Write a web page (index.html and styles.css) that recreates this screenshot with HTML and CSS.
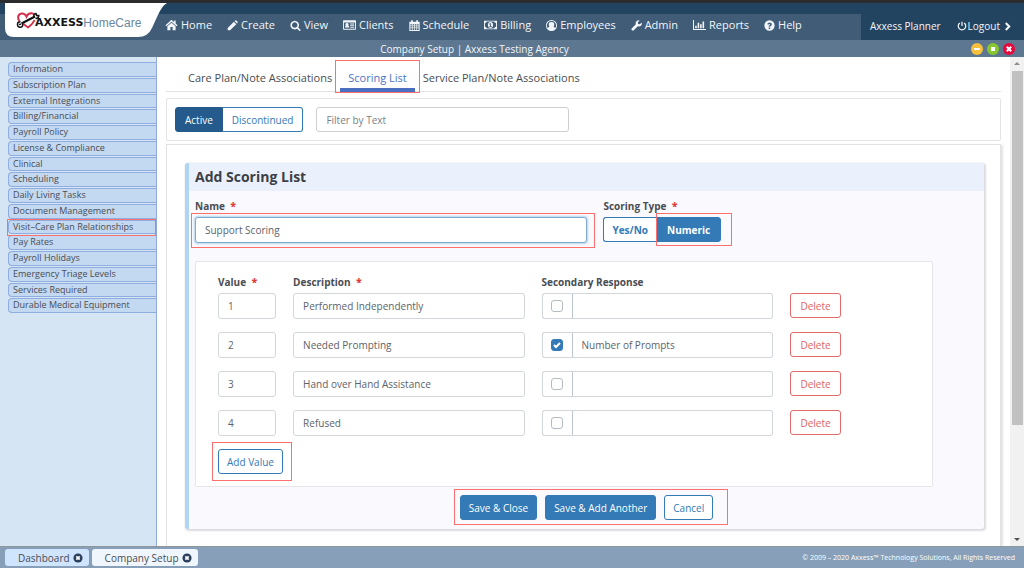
FILE: index.html
```html
<!DOCTYPE html>
<html lang="en">
<head>
<meta charset="utf-8">
<title>Company Setup | Axxess Testing Agency</title>
<meta name="viewport" content="width=device-width, initial-scale=1">
<link rel="stylesheet" href="styles.css">
</head>
<body>
<header class="topbar">
  <a class="logo" href="#" aria-label="Axxess HomeCare">
    <svg class="logo-tab" viewBox="0 0 162 34" aria-hidden="true"><path d="M0 0H162C157 3 155 8 152 14L147 25Q143 34 133 34H9Q0 34 0 25Z" fill="#fff"/></svg>
    <svg class="logo-mark" viewBox="0 0 24 17" aria-hidden="true">
      <path d="M3.500 9C0.500 5 3 1.500 6 1.500Q9 1.500 10.500 4.500Q12 1 15.500 1.200Q17 1.300 18 2.300" fill="none" stroke="#d2304c" stroke-width="2"/>
      <path d="M7.500 12L12 15.500Q17 12 18.500 8" fill="none" stroke="#d2304c" stroke-width="1.800"/>
      <path d="M5.500 11.500L19 4.500" stroke="#111" stroke-width="2"/>
      <path d="M4.500 9.800Q1.500 9.600 1.500 12.500T4.500 15.200Q7.500 15 6.500 11.500M3 12.600L5 12M18 5.500Q17 2 20 1.500L20.500 3.500L22.800 3.500Q22.800 6.500 19.500 6.500" fill="none" stroke="#111" stroke-width="1.500"/>
    </svg>
    <span class="logo-bold">AXXESS</span><span class="logo-light">HomeCare</span>
  </a>
  <nav class="nav" aria-label="Main">
    <a href="#"><svg class="i14" viewBox="0 0 16 16"><path d="M8 1L0 8.200L1.200 9.500L8 3.500L14.800 9.500L16 8.200L13.500 6V2H11.500V4.200Z"/><path d="M8 5L2.500 9.800V15H6.500V10.800H9.500V15H13.500V9.800Z"/></svg>Home</a>
    <a href="#"><svg viewBox="0 0 16 16"><path d="M1 11.500L10 2.500L13.500 6L4.500 15H1ZM11 1.500L12 0.600Q13 0 14 1L15.200 2.200Q16 3 15.400 4L14.500 5Z"/></svg>Create</a>
    <a href="#"><svg viewBox="0 0 1792 1792"><path d="M1216 832q0-185-131.500-316.500t-316.500-131.500-316.500 131.500-131.500 316.500 131.500 316.500 316.500 131.500 316.500-131.500 131.500-316.500zm512 832q0 52-38 90t-90 38q-54 0-90-38l-343-342q-179 124-399 124-143 0-273.500-55.500t-225-150-150-225-55.500-273.500 55.500-273.500 150-225 225-150 273.500-55.500 273.500 55.500 225 150 150 225 55.500 273.500q0 220-124 399l343 343q37 37 37 90z"/></svg>View</a>
    <a href="#"><svg class="i14" viewBox="0 0 18 16"><path fill-rule="evenodd" d="M1 1.500H17Q18 1.500 18 2.500V13.500Q18 14.500 17 14.500H1Q0 14.500 0 13.500V2.500Q0 1.500 1 1.500ZM1.300 4.500V13.200H16.700V4.500ZM3 11.500V10Q3 8.800 4 8.600Q3.300 8 3.300 7Q3.300 5.300 5.500 5.300T7.700 7Q7.700 8 7 8.600Q8.500 8.800 8.500 10V11.500ZM10 6H15.500V7.400H10ZM10 8.400H15.500V9.600H10ZM10 10.600H15.500V11.800H10Z"/></svg>Clients</a>
    <a href="#"><svg viewBox="0 0 16 16"><path fill-rule="evenodd" d="M0.500 2.500H3V0.500H5.500V2.500H10.500V0.500H13V2.500H15.500V16H0.500ZM2 6V8H4.200V6ZM5.200 6V8H7.500V6ZM8.500 6V8H10.800V6ZM11.800 6V8H14V6ZM2 9V11H4.200V9ZM5.200 9V11H7.500V9ZM8.500 9V11H10.800V9ZM11.800 9V11H14V9ZM2 12V14.500H4.200V12ZM5.200 12V14.500H7.500V12ZM8.500 12V14.500H10.800V12ZM11.800 12V14.500H14V12Z"/></svg>Schedule</a>
    <a href="#"><svg class="i14" viewBox="0 0 18 14"><path fill-rule="evenodd" d="M0 1H18V13H0ZM1.300 4.500V9.500Q3.600 9.700 3.800 11.700H14.200Q14.400 9.700 16.700 9.500V4.500Q14.400 4.300 14.200 2.300H3.800Q3.600 4.300 1.300 4.500ZM9 3Q12.500 3 12.500 7T9 11T5.500 7T9 3ZM8.400 4.500L7 5.700L7.700 6.500L8.400 6V8.800H7.200V9.700H10.800V8.800H9.600V4.500Z"/></svg>Billing</a>
    <a href="#"><svg viewBox="0 0 16 16"><path fill-rule="evenodd" d="M8 0A8 8 0 1 1 8 16A8 8 0 1 1 8 0ZM2.900 12Q3.500 9.800 5.200 9.500Q4 8.300 4 6.500Q4 3 8 3T12 6.500Q12 8.300 10.800 9.500Q12.500 9.800 13.100 12Q14.700 10.300 14.700 8A6.700 6.700 0 1 0 1.300 8Q1.300 10.300 2.900 12Z"/></svg>Employees</a>
    <a href="#"><svg viewBox="0 0 16 16"><path d="M15.800 4.200Q16.200 6.500 14.500 8.200Q12.600 9.900 9.900 9.200L4 15Q2.800 16 1.500 15Q0 13.600 1 12.300L7 6.300Q6.200 3.500 8 1.700Q9.700 0 12.200 0.600L12.500 0.900L10 3.300L10.300 5.800L12.800 6.200L15.300 3.900Z"/></svg>Admin</a>
    <a href="#"><svg class="i14" viewBox="0 0 18 16"><path d="M0 1H1.400V13.600H18V15H0ZM3 9H5.200V12.500H3ZM6.400 5H8.600V12.500H6.400ZM9.800 7H12V12.500H9.800ZM13.200 3H15.400V12.500H13.200Z"/></svg>Reports</a>
    <a href="#"><svg viewBox="0 0 16 16"><path fill-rule="evenodd" d="M8 0.500A7.500 7.500 0 1 1 8 15.500A7.500 7.500 0 1 1 8 0.500ZM4.600 5.800L6.400 6.800Q7 5.700 7.900 5.700Q9 5.700 9 6.500Q9 7 8 7.600Q6.800 8.400 6.800 9.800H9Q9 9.300 10 8.700Q11.500 7.800 11.500 6.300Q11.500 3.500 8.100 3.500Q5.800 3.500 4.600 5.800ZM6.800 10.800V13H9V10.800Z"/></svg>Help</a>
  </nav>
  <div class="account">
    <a href="#">Axxess Planner</a>
    <a class="logout" href="#"><svg viewBox="0 0 16 16" class="line"><path d="M4.500 3.200A6 6 0 1 0 11.500 3.200M8 1V8"/></svg>Logout<svg viewBox="0 0 12 16" class="line chev"><path d="M3.500 3L8.500 8L3.500 13"/></svg></a>
  </div>
</header>
<div class="titlebar">
  <h1>Company Setup | Axxess Testing Agency</h1>
  <div class="window-buttons">
    <button class="min" aria-label="Minimize"><svg viewBox="0 0 12 12"><path d="M3 6H9"/></svg></button>
    <button class="max" aria-label="Maximize"><svg viewBox="0 0 12 12"><path d="M4 6H8" stroke-width="4"/></svg></button>
    <button class="close" aria-label="Close"><svg viewBox="0 0 12 12"><path d="M3.800 3.800L8.200 8.200M8.200 3.800L3.800 8.200"/></svg></button>
  </div>
</div>
<div class="workspace">
  <aside class="sidebar">
    <ul>
      <li><a href="#">Information</a></li>
      <li><a href="#">Subscription Plan</a></li>
      <li><a href="#">External Integrations</a></li>
      <li><a href="#">Billing/Financial</a></li>
      <li><a href="#">Payroll Policy</a></li>
      <li><a href="#">License &amp; Compliance</a></li>
      <li><a href="#">Clinical</a></li>
      <li><a href="#">Scheduling</a></li>
      <li><a href="#">Daily Living Tasks</a></li>
      <li><a href="#">Document Management</a></li>
      <li class="marked mark-side"><a href="#">Visit–Care Plan Relationships</a></li>
      <li><a href="#">Pay Rates</a></li>
      <li><a href="#">Payroll Holidays</a></li>
      <li><a href="#">Emergency Triage Levels</a></li>
      <li><a href="#">Services Required</a></li>
      <li><a href="#">Durable Medical Equipment</a></li>
    </ul>
  </aside>
  <main class="content">
    <nav class="tabs" aria-label="Sections">
      <a href="#">Care Plan/Note Associations</a>
      <a href="#" class="current marked mark-tab">Scoring List</a>
      <a href="#">Service Plan/Note Associations</a>
    </nav>
    <section class="toolbar">
      <div class="segmented">
        <button class="btn navy">Active</button><button class="btn outline">Discontinued</button>
      </div>
      <input class="field filter" type="text" placeholder="Filter by Text" aria-label="Filter by Text">
    </section>
    <section class="panel">
      <form class="card">
        <h2>Add Scoring List</h2>
        <div class="card-body">
          <div class="top-fields">
            <div class="name-group">
              <label for="name">Name <b class="req">*</b></label>
              <div class="marked mark-name"><input class="field focused" id="name" type="text" value="Support Scoring"></div>
            </div>
            <div class="type-group">
              <span class="label" id="type-label">Scoring Type <b class="req">*</b></span>
              <div class="segmented strong" role="group" aria-labelledby="type-label">
                <button type="button" class="btn outline">Yes/No</button><span class="marked mark-numeric"><button type="button" class="btn primary">Numeric</button></span>
              </div>
            </div>
          </div>
          <div class="values">
            <div class="row heads">
              <span class="label" id="h-value">Value <b class="req">*</b></span>
              <span class="label" id="h-desc">Description <b class="req">*</b></span>
              <span class="label" id="h-sec">Secondary Response</span>
            </div>
            <div class="row">
              <input class="field" type="text" value="1" aria-labelledby="h-value">
              <input class="field" type="text" value="Performed Independently" aria-labelledby="h-desc">
              <div class="secondary"><span class="check"><input type="checkbox" aria-label="Enable secondary response 1"></span><input class="field" type="text" aria-labelledby="h-sec"></div>
              <button type="button" class="btn danger">Delete</button>
            </div>
            <div class="row">
              <input class="field" type="text" value="2" aria-labelledby="h-value">
              <input class="field" type="text" value="Needed Prompting" aria-labelledby="h-desc">
              <div class="secondary"><span class="check"><input type="checkbox" checked aria-label="Enable secondary response 2"><svg viewBox="0 0 12 12" aria-hidden="true"><path d="M3 6L5 8L9 4"/></svg></span><input class="field" type="text" value="Number of Prompts" aria-labelledby="h-sec"></div>
              <button type="button" class="btn danger">Delete</button>
            </div>
            <div class="row">
              <input class="field" type="text" value="3" aria-labelledby="h-value">
              <input class="field" type="text" value="Hand over Hand Assistance" aria-labelledby="h-desc">
              <div class="secondary"><span class="check"><input type="checkbox" aria-label="Enable secondary response 3"></span><input class="field" type="text" aria-labelledby="h-sec"></div>
              <button type="button" class="btn danger">Delete</button>
            </div>
            <div class="row">
              <input class="field" type="text" value="4" aria-labelledby="h-value">
              <input class="field" type="text" value="Refused" aria-labelledby="h-desc">
              <div class="secondary"><span class="check"><input type="checkbox" aria-label="Enable secondary response 4"></span><input class="field" type="text" aria-labelledby="h-sec"></div>
              <button type="button" class="btn danger">Delete</button>
            </div>
            <span class="marked mark-add"><button type="button" class="btn outline">Add Value</button></span>
          </div>
          <div class="actions">
            <div class="action-group marked mark-actions">
              <button type="button" class="btn primary">Save &amp; Close</button>
              <button type="button" class="btn primary">Save &amp; Add Another</button>
              <button type="button" class="btn outline">Cancel</button>
            </div>
          </div>
        </div>
      </form>
    </section>
  </main>
  <div class="scrollbar" aria-hidden="true"><i class="up"></i><i class="thumb"></i><i class="down"></i></div>
</div>
<footer class="taskbar">
  <div class="task dash"><a href="#">Dashboard</a><button aria-label="Close Dashboard"><svg viewBox="0 0 12 12"><circle cx="6" cy="6" r="5.500"/><path d="M4 4L8 8M8 4L4 8"/></svg></button></div>
  <div class="task setup"><a href="#">Company Setup</a><button aria-label="Close Company Setup"><svg viewBox="0 0 12 12"><circle cx="6" cy="6" r="5.500"/><path d="M4 4L8 8M8 4L4 8"/></svg></button></div>
  <p>© 2009 – 2020 Axxess™ Technology Solutions, All Rights Reserved</p>
</footer>
</body>
</html>
```

FILE: styles.css
```css
* { box-sizing: border-box; }
body {
  margin: 0;
  height: 100vh;
  display: flex;
  flex-direction: column;
  overflow: hidden;
  font: 10px/14px "Open Sans", "Noto Sans", sans-serif;
  color: #4a4d52;
  background: #fff;
}
a { color: inherit; text-decoration: none; }
button, input { font: inherit; margin: 0; }
h1, h2, p, ul { margin: 0; padding: 0; }

.topbar {
  position: relative;
  flex: none;
  display: flex;
  padding-top: 11px;
  border-top: 3px solid #2b2c2e;
  background: #234460;
  color: #f2f6fa;
}
.logo {
  position: absolute;
  top: 0;
  left: 5px;
  width: 162px;
  height: 34px;
  display: flex;
  align-items: center;
  padding: 5px 0 0 11px;
}
.logo-tab { position: absolute; left: 0; top: 0; width: 162px; height: 34px; }
.logo-mark { position: relative; width: 24px; height: 17px; margin: 0 -5px 5px 0; }
.logo-bold { position: relative; font: bold 11px/18px "DejaVu Sans", sans-serif; color: #151515; }
.logo-light { position: relative; font: 12px/16px "Liberation Sans", sans-serif; color: #6c86a0; }
.nav {
  flex: 1;
  display: flex;
  gap: 15px;
  padding-left: 165px;
  height: 26px;
  align-items: center;
  background: #405c76;
  font-size: 11px;
  font-weight: 500;
  white-space: nowrap;
}
.nav a { display: flex; align-items: center; gap: 3px; padding-bottom: 4px; }
.nav svg { width: 11px; height: 11px; fill: #f2f6fa; }
.nav .i14 { width: 13px; height: 12px; }
.account {
  flex: none;
  width: 163px;
  display: flex;
  justify-content: space-between;
  align-items: center;
  padding: 0 12px 2px 9px;
}
.logout { display: flex; align-items: center; gap: 1px; }
.line { width: 10px; height: 10px; fill: none; stroke: #f2f6fa; stroke-width: 2; }
.chev { width: 9px; height: 11px; stroke-width: 3; margin-left: 2px; }

.titlebar {
  flex: none;
  display: flex;
  align-items: center;
  height: 17px;
  padding-right: 9px;
  background: #5d7790;
  color: #f2f6fa;
}
.titlebar h1 { flex: 1; margin-right: 22px; text-align: center; font-size: 10px; font-weight: 400; }
.window-buttons { display: flex; gap: 4px; }
.window-buttons button { display: block; width: 12px; height: 12px; padding: 0; border: 0; border-radius: 50%; }
.window-buttons svg { display: block; width: 12px; height: 12px; stroke: #fff; stroke-width: 2; }
.min { background: #f6bf3c; }
.max { background: #86c62f; }
.close { background: #e8083b; }

.workspace { flex: 1; min-height: 0; display: flex; }
.sidebar {
  flex: none;
  width: 157px;
  padding: 5px 0 0 8px;
  border-right: 1px solid #8fabdb;
  background: #d5e5f4;
  font-size: 9px;
}
.sidebar ul { display: grid; grid-auto-rows: 1fr; gap: 1px; height: 251px; list-style: none; }
.sidebar li a {
  display: block;
  height: 100%;
  padding-left: 4px;
  border: 1px solid #8fadde;
  border-right: 0;
  border-radius: 4px 0 0 4px;
  background: #c3d8f1;
  line-height: 12px;
}

/* Red outlines that call out the controls to use */
.marked { position: relative; }
.marked::after { content: ""; position: absolute; z-index: 1; border: 1px solid #fb6f6f; pointer-events: none; }
.mark-side::after { inset: -1px 0 -2px -1px; }
.mark-tab::after { inset: 3px -5px -5px; }
.mark-name::after { inset: -4px -8px -5px -4px; }
.mark-numeric::after { inset: -4px -11px -4px 0; }
.mark-add::after { inset: -7px -9px -7px -6px; }
.mark-actions::after { inset: -6px -15px -5px -6px; }

.content { flex: 1; min-width: 0; padding: 0 9px; overflow: hidden; }
.tabs { display: flex; height: 35px; padding-left: 14px; border-bottom: 1px solid #e3e3e6; font-size: 11px; }
.tabs a { padding: 14px 8px 0; white-space: nowrap; }
.tabs .current { margin-bottom: -1px; border-bottom: 4px solid #4b6fc0; color: #4b74c4; }
.toolbar {
  display: flex;
  gap: 13px;
  margin-top: 6px;
  padding: 8px;
  border: 1px solid #e4e4e6;
  border-radius: 2px;
}
.panel {
  margin-top: 3px;
  padding: 18px 16px 18px 18px;
  height: 100%;
  border: 1px solid #e2e2e4;
  box-shadow: 2px 1px 2px #e3e3e5;
}

.btn {
  height: 25px;
  padding: 0 8px;
  border: 1px solid #337ab7;
  border-radius: 3px;
  background: #fff;
  color: #337ab7;
  white-space: nowrap;
}
.navy { background: #245b8c; border-color: #245b8c; color: #fff; }
.primary { background: #337ab7; color: #fff; }
.danger { border-color: #e36a6a; color: #e06464; }
.segmented { display: flex; }
.segmented > .btn:first-child { border-radius: 3px 0 0 3px; }
.segmented > :last-child, .segmented > :last-child .btn { border-radius: 0 3px 3px 0; }
.toolbar .btn { padding: 0 9px; border-left-width: 0; }
.toolbar .navy { border-left-width: 1px; }
.strong .btn { font-weight: 700; padding: 0 10px; }
.strong .outline { border-right: 0; padding: 0 8px; }
.field {
  min-width: 0;
  width: 100%;
  height: 26px;
  padding: 0 9px;
  border: 1px solid #d3d7dc;
  border-radius: 3px;
  background: #fff;
  color: #5d636a;
}
.field::placeholder { color: #7a7f86; opacity: 1; }
.toolbar .filter { width: 253px; height: 25px; border-color: #cfcfd2; }
.focused { border-color: #80acd2; box-shadow: 0 0 2px 1px #b9d4ec; }

.card {
  border-left: 4px solid #b0d4f4;
  border-radius: 3px;
  background: #f9f9fe;
  box-shadow: 1px 1px 2px 1px #dcdce0;
}
.card h2 { padding: 4px 6px; font-size: 14px; line-height: 20px; background: #eaf1fc; color: #3c4046; }
.card-body { padding: 8px 6px 9px; }
.top-fields { display: grid; grid-template-columns: 395fr 377fr; gap: 16px; }
label, .label { display: block; font-weight: 700; line-height: 14px; }
.req { margin-left: 3px; color: #e23b3b; }
.name-group label, .type-group .label { margin-bottom: 4px; }
.values {
  margin: 18px 45px 0 0;
  padding: 13px 91px 12px 22px;
  border: 1px solid #e6e6ea;
  border-radius: 2px;
  background: #fff;
}
.row {
  display: grid;
  grid-template-columns: 58fr 231fr 231fr 51px;
  gap: 17px;
  margin-bottom: 13px;
}
.heads { margin-bottom: 4px; }
.secondary { display: flex; }
.secondary .field { border-left-color: #bcc4cc; border-radius: 0 3px 3px 0; }
.check {
  position: relative;
  flex: none;
  display: grid;
  place-items: center;
  width: 30px;
  border: 1px solid #d3d7dc;
  border-right: 0;
  border-radius: 3px 0 0 3px;
}
.check input { appearance: none; width: 12px; height: 12px; border: 1px solid #b4bbc3; border-radius: 3px; background: #fff; }
.check input:checked { background: #337ab7; border-color: #337ab7; }
.check svg { position: absolute; inset: 6px 8px; width: 12px; height: 12px; fill: none; stroke: #fff; stroke-width: 2; pointer-events: none; }
.mark-add { display: inline-block; }
.actions { display: flex; justify-content: center; margin-top: 8px; }
.action-group { display: flex; gap: 8px; }

.scrollbar { flex: none; width: 14px; display: flex; flex-direction: column; align-items: center; padding: 5px 0; background: #f1f1f1; }
.up { border: 3px solid transparent; border-top: 0; border-bottom-color: #8d8d8d; }
.down { border: 3px solid transparent; border-bottom: 0; border-top-color: #505050; margin-top: auto; }
.thumb { width: 11px; height: 74%; margin-top: 6px; background: #c1c1c1; }

.taskbar {
  flex: none;
  display: flex;
  gap: 3px;
  align-items: center;
  height: 22px;
  padding: 0 9px 0 5px;
  border-top: 1px solid #8f969c;
  background: #879fb8;
}
.task { display: flex; align-items: center; gap: 3px; height: 17px; padding: 0 6px 0 13px; border-radius: 3px; background: #cfe4fd; }
.setup { background: #f0f6fe; }
.task button { padding: 0; border: 0; background: none; height: 10px; }
.task svg { display: block; width: 10px; height: 10px; fill: #2a3f5c; }
.task path { stroke: #fff; stroke-width: 2; }
.taskbar p { margin-left: auto; font-size: 7px; color: #fff; }
```
